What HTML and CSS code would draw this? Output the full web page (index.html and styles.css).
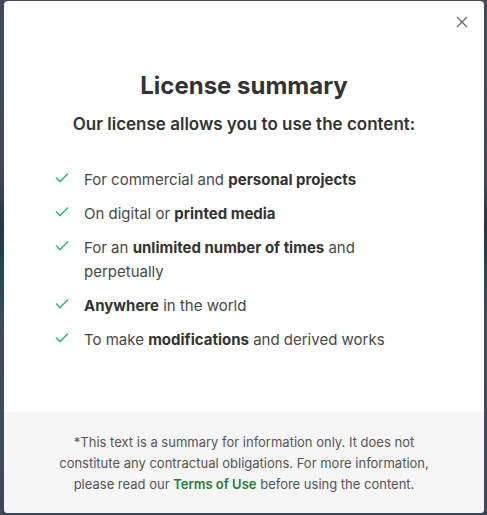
FILE: index.html
```html
<!DOCTYPE html>
<html lang="en">
<head>
<meta charset="utf-8">
<title>License summary</title>
<link rel="stylesheet" href="styles.css">
</head>
<body>
<div class="backdrop">
  <div class="modal">
    <div class="modal-main">
      <button class="close" aria-label="Close">
        <svg width="12" height="12" viewBox="0 0 12 12"><path d="M1 1 L11 11 M11 1 L1 11" stroke="#6b6b6b" stroke-width="1.4" fill="none"/></svg>
      </button>
      <h1 class="title">License summary</h1>
      <h2 class="subtitle">Our license allows you to use the content:</h2>
      <ul class="list">
        <li><span class="check"><svg width="14" height="11" viewBox="0 0 14 11"><path d="M1 5.5 L5 9.5 L13 1.5" stroke="#3dbd78" stroke-width="1.6" fill="none"/></svg></span><span class="txt">For commercial and <b>personal projects</b></span></li>
        <li><span class="check"><svg width="14" height="11" viewBox="0 0 14 11"><path d="M1 5.5 L5 9.5 L13 1.5" stroke="#3dbd78" stroke-width="1.6" fill="none"/></svg></span><span class="txt">On digital or <b>printed media</b></span></li>
        <li><span class="check"><svg width="14" height="11" viewBox="0 0 14 11"><path d="M1 5.5 L5 9.5 L13 1.5" stroke="#3dbd78" stroke-width="1.6" fill="none"/></svg></span><span class="txt">For an <b>unlimited number of times</b> and perpetually</span></li>
        <li><span class="check"><svg width="14" height="11" viewBox="0 0 14 11"><path d="M1 5.5 L5 9.5 L13 1.5" stroke="#3dbd78" stroke-width="1.6" fill="none"/></svg></span><span class="txt"><b>Anywhere</b> in the world</span></li>
        <li><span class="check"><svg width="14" height="11" viewBox="0 0 14 11"><path d="M1 5.5 L5 9.5 L13 1.5" stroke="#3dbd78" stroke-width="1.6" fill="none"/></svg></span><span class="txt">To make <b>modifications</b> and derived works</span></li>
      </ul>
    </div>
    <div class="modal-footer">
      <p>*This text is a summary for information only. It does not constitute any contractual obligations. For more information, please read our <a href="#">Terms of Use</a> before using the content.</p>
    </div>
  </div>
</div>
</body>
</html>
```

FILE: styles.css
```css
* { box-sizing: border-box; }
html, body { margin: 0; padding: 0; }
body {
  background: #3e4658;
  font-family: Inter, "Noto Sans", sans-serif;
}
.backdrop {
  width: 487px;
  height: 515px;
  padding: 1px 3px 2px 4px;
  background: linear-gradient(180deg, #414a5c 0%, #3f4759 35%, #263446 44%, #1f4a50 52%, #3f4a5c 62%, #3e4a64 85%, #3e4658 100%);
}
.modal {
  width: 480px;
  height: 512px;
  background: #fff;
  border-radius: 4px;
  display: flex;
  flex-direction: column;
  overflow: hidden;
}
.modal-main {
  position: relative;
  flex: 1;
  padding: 69px 0 0 51px;
}
.close {
  position: absolute;
  top: 15px;
  right: 16px;
  width: 12px;
  height: 12px;
  padding: 0;
  border: 0;
  background: none;
  display: flex;
}
.title {
  margin: 0 0 0 -51px;
  text-align: center;
  font-size: 24px;
  line-height: 32px;
  font-weight: 700;
  color: #333;
}
.subtitle {
  margin: 10px 0 0 -51px;
  text-align: center;
  font-size: 17px;
  line-height: 24px;
  font-weight: 600;
  color: #333;
}
.list {
  list-style: none;
  margin: 32px 0 0 0;
  padding: 0;
  display: flex;
  flex-direction: column;
  gap: 10px;
}
.list li {
  display: flex;
  align-items: flex-start;
  font-size: 15px;
  line-height: 24px;
  color: #484848;
  max-width: 340px;
}
.check {
  width: 29px;
  flex: none;
  padding-top: 4px;
  display: flex;
}
.txt b { font-weight: 700; color: #333; }
.modal-footer {
  background: #f6f6f6;
  height: 101px;
  padding: 20px 50px 0;
}
.modal-footer p {
  margin: 0;
  text-align: center;
  font-size: 13px;
  line-height: 21px;
  color: #555;
}
.modal-footer a {
  color: #2b7b3b;
  font-weight: 600;
  text-decoration: none;
}
```
